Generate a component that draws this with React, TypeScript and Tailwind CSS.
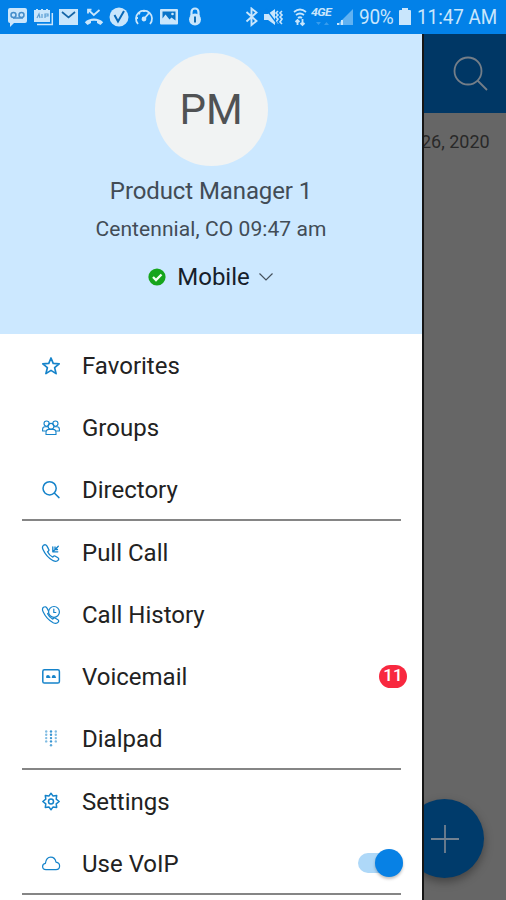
import type { ReactNode } from "react";

const line = {
  fill: "none",
  stroke: "currentColor",
  strokeLinecap: "round" as const,
  strokeLinejoin: "round" as const,
};

function Icon({ children, width = 1.3 }: { children: ReactNode; width?: number }) {
  return (
    <svg className="h-5 w-5 shrink-0 text-[#1583ca]" viewBox="0 0 20 20" {...line} strokeWidth={width}>
      {children}
    </svg>
  );
}

const handset =
  "M2.500 2.300C1.300 3.200 1.200 4.700 2 6.500c2.200 5 5.500 8.700 10.200 11.200 2 1 3.800 1 5-.5.8-1 .6-1.800-.3-2.400l-2.500-1.600c-.9-.6-1.600-.4-2.200.4l-.4.500c-2.200-1-4.200-3.200-5.200-5.400l.6-.5c.8-.6.9-1.300.4-2.100L6 3.100c-.8-1.400-2.100-1.800-3.500-.8z";

const icons = {
  star: (
    <Icon width={1.7}>
      <path d="M10 2l2.200 5.400 6 .4-4.600 3.800 1.500 6L10 14.400l-5.100 3.200 1.500-6L1.800 7.800l6-.4z" />
    </Icon>
  ),
  groups: (
    <Icon width={1.1}>
      <circle cx="5.600" cy="5.600" r="2.600" />
      <circle cx="14.400" cy="5.600" r="2.600" />
      <circle cx="10" cy="8.300" r="2.900" />
      <path d="M5 16.500h10v-1.800c0-2-1.300-3.300-3-3.300H8c-1.700 0-3 1.300-3 3.300zM5 13H1.600v-1.500c0-1.600 1-2.700 2.400-2.700h2.600M15 13h3.400v-1.500c0-1.600-1-2.700-2.400-2.700h-2.600" />
    </Icon>
  ),
  search: (
    <Icon width={1.5}>
      <circle cx="8.600" cy="8.300" r="6.600" />
      <path d="M13.300 13l4.700 4.600" />
    </Icon>
  ),
  pull: (
    <Icon width={1.3}>
      <path d={handset} />
      <path d="M17.300 3.300l-5 5M11.800 3.800v5h5M14 4v2.500h2.500" />
    </Icon>
  ),
  history: (
    <Icon width={1.2}>
      <path d={handset} />
      <circle cx="13" cy="6.900" r="5.400" fill="white" />
      <path d="M12.800 4v3.500h2" />
    </Icon>
  ),
  voicemail: (
    <Icon width={1.5}>
      <rect x="1.800" y="2.800" width="16.600" height="13.200" rx="1.600" />
      <path d="M5.800 10c0-1.700 2.300-1.700 2.300 0M11.600 10c0-1.700 2.300-1.700 2.300 0M5.800 10.300h3M11.400 10.300h3" />
    </Icon>
  ),
  dialpad: (
    <Icon width={0}>
      <g fill="currentColor">
        {[2.500, 5.800, 9.100, 12.400].map((y) =>
          [5.200, 10, 14.800].map((x) => (
            <circle key={`${x}-${y}`} cx={x} cy={y} r="1.200" opacity={x === 10 ? 0.85 : 0.55} />
          )),
        )}
        <circle cx="10" cy="16.200" r="1.200" opacity="0.700" />
      </g>
    </Icon>
  ),
  settings: (
    <Icon width={1.5}>
      <path d="M10 1.300L12.100 4.100 15.700 3.600 15.200 7.200 18.200 9.500 15.200 11.800 15.700 15.400 12.100 14.900 10 17.700 7.900 14.900 4.300 15.400 4.800 11.800 1.800 9.500 4.800 7.200 4.300 3.600 7.900 4.100z" />
      <circle cx="10" cy="9.500" r="2.500" />
    </Icon>
  ),
  cloud: (
    <Icon width={1.2}>
      <path d="M5 15.700c-2 0-3.400-1.300-3.400-3.100 0-1.600 1.100-2.900 2.800-3.200.5-3.700 2.500-6.200 5.300-6.200 2.700 0 4.700 2 5.300 5 2.200.4 3.600 1.900 3.600 3.900 0 2.200-1.500 3.600-3.600 3.600z" />
    </Icon>
  ),
};

function Row({ icon, label, children }: { icon: ReactNode; label: string; children?: ReactNode }) {
  return (
    <div className="flex h-[62px] shrink-0 items-center pl-[41px]">
      {icon}
      <span className="ml-[21px] whitespace-nowrap text-2xl text-[#222]">{label}</span>
      {children}
    </div>
  );
}

function StatusBar() {
  return (
    <header className="flex h-[34px] shrink-0 items-center bg-[#0281e8] text-[#c9e6fc]">
      <div className="flex items-center pl-[7px]">
        <svg className="h-5 w-[21px]" viewBox="0 0 21 20">
          <path fill="currentColor" d="M3 1h15q2 0 2 2v11q0 2-2 2H7l-4 4v-4q-2 0-2-2V3q0-2 2-2z" />
          <g fill="none" stroke="#438dca" strokeWidth="1.500"><circle cx="6.500" cy="8" r="2.500" /><circle cx="14.500" cy="8" r="2.500" /><path d="M6 11h10" /></g>
        </svg>
        <svg className="ml-[5px] h-5 w-[21px]" viewBox="0 0 21 20">
          <path fill="currentColor" d="M3 2h2v1h3V2h2v1h3V2h2v1h2v12H1V3h2z" />
          <path fill="none" stroke="currentColor" strokeWidth="1.500" d="M4 17.500h15.300V6" />
          <path fill="none" stroke="#5d9fd4" strokeWidth="1.200" d="M4 11l2-4 1 4M9 11V7M12 11V7h3v2h-3" />
        </svg>
        <svg className="ml-[4px] h-5 w-5" viewBox="0 0 20 20">
          <path fill="currentColor" d="M1 2h19v16H1z" /><path fill="none" stroke="#1766a7" strokeWidth="1.700" d="M4 5l6.500 5.500L17 5" />
        </svg>
        <svg className="ml-[6px] h-5 w-5" viewBox="0 0 20 20" fill="currentColor">
          <path d="M.8 15.200C5.500 10.300 14.500 10.300 19.200 15.200L16.500 18l-3.500-2v-2q-3-.7-6 0v2l-3.500 2z" />
          <path fill="none" stroke="currentColor" strokeWidth="1.800" d="M4.500 3l5.300 5L15.500 3M4 6.500V2.700h3.500" />
        </svg>
        <svg className="ml-[5px] h-5 w-5" viewBox="0 0 20 20">
          <circle cx="10" cy="10" r="9.500" fill="currentColor" /><path fill="none" stroke="#0869b8" strokeWidth="2" d="M5.500 8l3.500 6.500L15 4" />
        </svg>
        <svg className="ml-[5px] h-5 w-5" viewBox="0 0 20 20" fill="none" stroke="currentColor" strokeWidth="1.800">
          <path d="M4 17a8 8 0 1 1 12 0M10 12l5-6M2 11h2M4 6l2 1M10 3v2" /><circle cx="10" cy="12" r="1.500" fill="currentColor" />
        </svg>
        <svg className="ml-[5px] h-5 w-5" viewBox="0 0 20 20">
          <rect x="1" y="2" width="18" height="15.500" rx="1" fill="currentColor" /><path d="M3.500 4.500h13v9l-4-3-2 2-4-5-3 4z" fill="#0873c8" /><circle cx="13.500" cy="7" r="1.300" fill="currentColor" />
        </svg>
        <svg className="ml-[9px] h-5 w-[14px]" viewBox="0 0 14 20">
          <path fill="none" stroke="currentColor" strokeWidth="2.200" d="M3.500 9V5a3.500 3.500 0 0 1 7 0v4" /><circle cx="7" cy="12.500" r="6" fill="currentColor" /><path stroke="#126cb1" strokeWidth="2" d="M7 9.500v6" />
        </svg>
      </div>
      <div className="ml-[43px] flex items-center">
        <svg className="h-5 w-[13px]" viewBox="0 0 13 20" fill="none" stroke="currentColor" strokeWidth="1.900"><path d="M1.500 5l10 9-5 4V1.500l5 4-10 9" /></svg>
        <svg className="ml-[5px] h-5 w-5" viewBox="0 0 20 20">
          <path fill="currentColor" d="M1 7h4l7-5v16l-7-5H1z" /><path fill="none" stroke="currentColor" strokeWidth="1.600" d="M15 4l-2 2 2 2-2 2 2 2-2 3 2 2M19 4l-2 2 2 2-2 2 2 2-2 3 2 2" /><path stroke="#0281e8" strokeWidth="1.300" d="M3 2l12 16" />
        </svg>
        <svg className="ml-[10px] h-5 w-[14px]" viewBox="0 0 14 20" fill="none" stroke="currentColor" strokeWidth="1.800">
          <path d="M1 5q6-5 12 0M3 8q4-3 8 0M5 11q2-1.500 4 0M4.500 18v-5M2.500 15l2-2 2 2M9.500 12v6M7.500 16l2 2 2-2" />
        </svg>
        <div className="ml-[4px] flex h-5 w-[23px] flex-col">
          <span className="origin-left scale-x-[1.250] text-[10px] font-bold italic leading-[12px] tracking-[-0.500px]">4GE</span>
          <svg className="h-[7px] w-[22px]" viewBox="0 0 22 7" fill="#379ced"><path d="M5 3h5L7.500 6zM13 6h5l-2.500-3z" /></svg>
        </div>
        <svg className="ml-[2px] h-[18px] w-[18px]" viewBox="0 0 18 18">
          <path fill="#61b2f2" d="M1 17L17 1v16z" /><path fill="currentColor" d="M1 17v-2h2v2zM5 17v-5h2v5z" />
        </svg>
        <span className="ml-[5px] w-[35px] origin-left scale-x-[0.950] whitespace-nowrap text-[20px] tracking-[-0.300px]">90%</span>
        <svg className="ml-[5px] h-5 w-3" viewBox="0 0 12 20" fill="currentColor"><path d="M3 1h6v2h2q1 0 1 1v14H0V4q0-1 1-1h2z" /></svg>
        <span className="ml-[6px] origin-left scale-x-[0.940] whitespace-nowrap text-[20px]">11:47 AM</span>
      </div>
    </header>
  );
}

function Profile() {
  return (
    <section className="flex h-[300px] shrink-0 flex-col items-center bg-[#cce8ff] pt-[19px]">
      <div className="flex h-[113px] w-[113px] items-center justify-center rounded-full bg-[#f1f3f3] text-[42px] text-[#505254]">PM</div>
      <div className="mt-[10px] whitespace-nowrap text-[24px] leading-[30px] tracking-[-0.100px] text-[#424c56]">Product Manager 1</div>
      <div className="mt-[9px] whitespace-nowrap text-[21px] leading-7 tracking-[0.080px] text-[#424c56]">Centennial, CO 09:47 am</div>
      <div className="mt-[18px] flex h-8 items-center">
        <svg className="h-[18px] w-[18px]" viewBox="0 0 18 18"><circle cx="9" cy="9" r="8.600" fill="#16a51b" /><path d="M5 9l3 3 5.500-5.500" fill="none" stroke="#f2fff2" strokeWidth="2.300" /></svg>
        <span className="ml-[11px] text-2xl text-[#17202a]">Mobile</span>
        <svg className="ml-[8px] h-4 w-4" viewBox="0 0 16 16" fill="none" stroke="#45515d" strokeWidth="1.200"><path d="M1.500 4.500L8 11l6.500-6.500" /></svg>
      </div>
    </section>
  );
}

function Divider() {
  return <div className="ml-[22px] h-[2px] w-[379px] shrink-0 bg-[#858585]" />;
}

export default function App() {
  return (
    <div className="flex h-[900px] w-[506px] flex-col overflow-hidden bg-white font-['Roboto',sans-serif]">
      <StatusBar />
      <div className="flex min-h-0 flex-1">
        <aside className="flex w-[422px] shrink-0 flex-col overflow-hidden bg-white">
          <Profile />
          <nav className="flex flex-col pt-px">
            <Row icon={icons.star} label="Favorites" />
            <Row icon={icons.groups} label="Groups" />
            <Row icon={icons.search} label="Directory" />
            <div className="-mt-[2px] mb-px"><Divider /></div>
            <Row icon={icons.pull} label="Pull Call" />
            <Row icon={icons.history} label="Call History" />
            <Row icon={icons.voicemail} label="Voicemail">
              <span className="ml-auto mr-[15px] flex h-[23px] w-[28px] -translate-y-px items-center justify-center rounded-full bg-[#f8283f] text-[17px] font-medium text-white">11</span>
            </Row>
            <Row icon={icons.dialpad} label="Dialpad" />
            <div className="-mt-[2px] mb-px"><Divider /></div>
            <Row icon={icons.settings} label="Settings" />
            <Row icon={icons.cloud} label="Use VoIP">
              <div className="ml-auto mr-[19px] flex h-5 w-[45px] -translate-y-px items-center justify-end rounded-full bg-[#aed8f8]">
                <span className="h-7 w-7 shrink-0 rounded-full bg-[#0781e5] shadow-[0_2px_3px_rgba(0,0,0,0.25)]" />
              </div>
            </Row>
            <div className="-mt-[2px]"><Divider /></div>
          </nav>
        </aside>
        <main className="flex w-[84px] shrink-0 flex-col overflow-hidden border-l-2 border-[#151515] bg-[#666]">
          <div className="flex h-[79px] shrink-0 items-center bg-[#003765] pl-[27px]">
            <svg className="h-10 w-10" viewBox="0 0 40 40" fill="none" stroke="#747e88" strokeWidth="1.800"><circle cx="17" cy="17" r="13.500" /><path d="M26.500 26.500L36 36" /></svg>
          </div>
          <div className="-ml-[3px] whitespace-nowrap pt-[16px] text-[18px] leading-[26px] text-[#292929]">26, 2020</div>
          <div className="-ml-[19px] mb-[22px] mt-auto flex h-[79px] w-[79px] shrink-0 items-center justify-center rounded-full bg-[#003b6b] shadow-[0_4px_10px_rgba(0,0,0,0.35)]">
            <svg className="h-[30px] w-[30px]" viewBox="0 0 30 30" stroke="#728190" strokeWidth="1.800"><path d="M15 1v28M1 15h28" /></svg>
          </div>
        </main>
      </div>
    </div>
  );
}
